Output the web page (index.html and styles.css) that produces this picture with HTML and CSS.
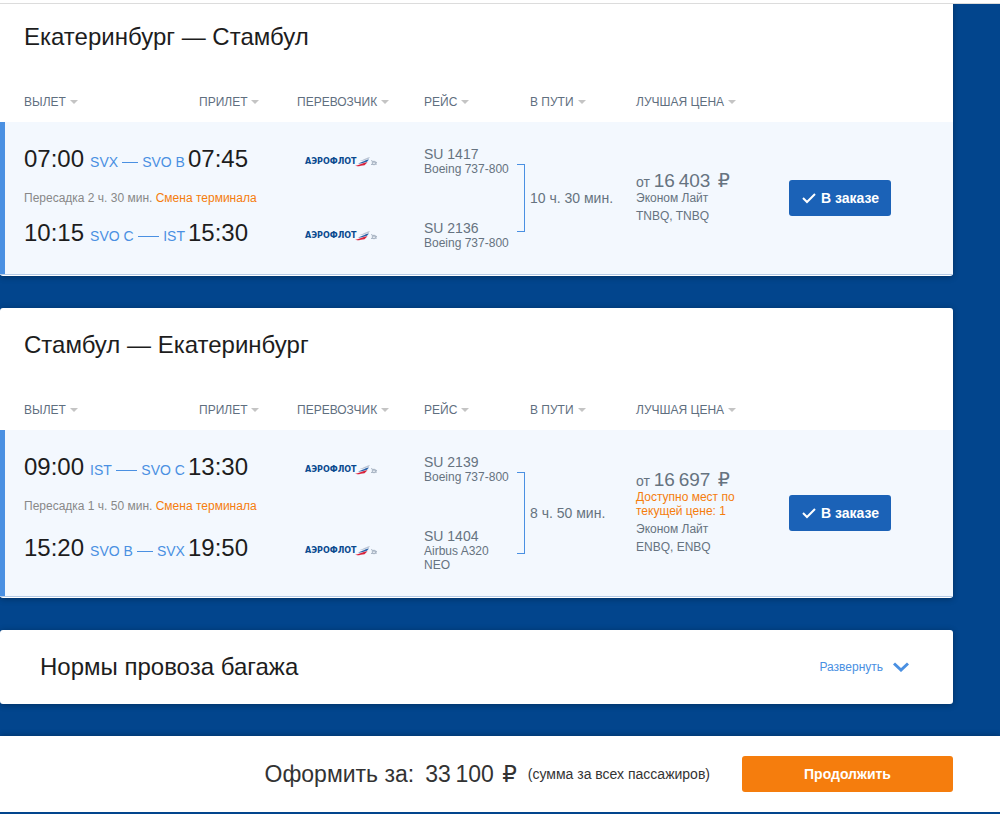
FILE: index.html
```
<!DOCTYPE html>
<html lang="ru">

<head>
	<meta charset="UTF-8">
	<meta name="viewport" content="width=device-width, initial-scale=1">
	<title>Выбор рейсов</title>
	<link rel="stylesheet" href="styles.css">
</head>

<body>
	<svg width="0" height="0" class="sprite" aria-hidden="true">
		<symbol id="wing" viewBox="0 0 24 12">
			<path d="M5 4.8 C8 4.4 9 2.4 15 1 L13.5 3 C10 3.6 8 5.6 5 4.8Z" fill="#b9c3d3" />
			<path d="M3 7.2 C7 6.6 9 4.2 14 3.4 L12 5.8 C9 6.3 7 8.2 3 7.2Z" fill="#2c62a8" />
			<path d="M0 9.8 C5 9 7 7 12.5 6.2 L9.5 9.2 C6 9.4 3 11 0 9.8Z" fill="#d8233c" />
			<path d="M16 4.5 L19 6 M16 8.5 L22 8 M18 6 L22 6.5" stroke="#a9b5c4" stroke-width="1" />
			<circle cx="19" cy="7" r="1.8" fill="none" stroke="#a9b5c4" stroke-width="1" />
		</symbol>
		<symbol id="check" viewBox="0 0 14 12">
			<path d="M1 6 L5 10 L13 2" fill="none" stroke="#fff" stroke-width="2" />
		</symbol>
	</svg>

	<div class="topbar"></div>

	<main class="page">
		<section class="card">
			<h2>Екатеринбург — Стамбул</h2>
			<table class="flights">
				<colgroup>
					<col class="c-dep">
					<col class="c-arr">
					<col class="c-carrier">
					<col class="c-flight">
					<col class="c-bracket">
					<col class="c-duration">
					<col class="c-price">
					<col>
				</colgroup>
				<thead>
					<tr>
						<th><button type="button" class="sort">ВЫЛЕТ</button></th>
						<th><button type="button" class="sort">ПРИЛЕТ</button></th>
						<th><button type="button" class="sort">ПЕРЕВОЗЧИК</button></th>
						<th><button type="button" class="sort">РЕЙС</button></th>
						<td></td>
						<th class="duration"><button type="button" class="sort">В ПУТИ</button></th>
						<th><button type="button" class="sort">ЛУЧШАЯ ЦЕНА</button></th>
						<td></td>
					</tr>
				</thead>
				<tbody>
					<tr class="first">
						<td colspan="2" class="route">
							<div class="leg">
								<span class="time">07:00</span>
								<span class="ports">SVX<i></i>SVO B</span>
								<span class="time">07:45</span>
							</div>
						</td>
						<td class="carrier"><div class="logo">АЭРОФЛОТ<svg class="wing"><use href="#wing" /></svg></div></td>
						<td class="flight"><div class="num">SU 1417</div>Boeing 737-800</td>
						<td rowspan="3" class="bracket"></td>
						<td rowspan="3" class="duration">10 ч. 30 мин.</td>
						<td rowspan="3" class="price">
							<div class="sum">от <b>16&#8201;403 <span class="rub">₽</span></b></div>
							<div>Эконом Лайт</div>
							<div>TNBQ, TNBQ</div>
						</td>
						<td rowspan="3"><button type="button" class="btn chosen"><svg class="check"><use href="#check" /></svg>В заказе</button></td>
					</tr>
					<tr class="transfer">
						<td colspan="4">Пересадка 2 ч. 30 мин. <span class="warn">Смена терминала</span></td>
					</tr>
					<tr class="last">
						<td colspan="2" class="route">
							<div class="leg">
								<span class="time">10:15</span>
								<span class="ports">SVO C<i></i>IST</span>
								<span class="time">15:30</span>
							</div>
						</td>
						<td class="carrier"><div class="logo">АЭРОФЛОТ<svg class="wing"><use href="#wing" /></svg></div></td>
						<td class="flight"><div class="num">SU 2136</div>Boeing 737-800</td>
					</tr>
				</tbody>
			</table>
		</section>

		<section class="card">
			<h2>Стамбул — Екатеринбург</h2>
			<table class="flights">
				<colgroup>
					<col class="c-dep">
					<col class="c-arr">
					<col class="c-carrier">
					<col class="c-flight">
					<col class="c-bracket">
					<col class="c-duration">
					<col class="c-price">
					<col>
				</colgroup>
				<thead>
					<tr>
						<th><button type="button" class="sort">ВЫЛЕТ</button></th>
						<th><button type="button" class="sort">ПРИЛЕТ</button></th>
						<th><button type="button" class="sort">ПЕРЕВОЗЧИК</button></th>
						<th><button type="button" class="sort">РЕЙС</button></th>
						<td></td>
						<th class="duration"><button type="button" class="sort">В ПУТИ</button></th>
						<th><button type="button" class="sort">ЛУЧШАЯ ЦЕНА</button></th>
						<td></td>
					</tr>
				</thead>
				<tbody>
					<tr class="first">
						<td colspan="2" class="route">
							<div class="leg">
								<span class="time">09:00</span>
								<span class="ports">IST<i></i>SVO C</span>
								<span class="time">13:30</span>
							</div>
						</td>
						<td class="carrier"><div class="logo">АЭРОФЛОТ<svg class="wing"><use href="#wing" /></svg></div></td>
						<td class="flight"><div class="num">SU 2139</div>Boeing 737-800</td>
						<td rowspan="3" class="bracket"></td>
						<td rowspan="3" class="duration">8 ч. 50 мин.</td>
						<td rowspan="3" class="price">
							<div class="sum">от <b>16&#8201;697 <span class="rub">₽</span></b></div>
							<div class="seats">Доступно мест по<br>текущей цене: 1</div>
							<div>Эконом Лайт</div>
							<div>ENBQ, ENBQ</div>
						</td>
						<td rowspan="3"><button type="button" class="btn chosen"><svg class="check"><use href="#check" /></svg>В заказе</button></td>
					</tr>
					<tr class="transfer">
						<td colspan="4">Пересадка 1 ч. 50 мин. <span class="warn">Смена терминала</span></td>
					</tr>
					<tr class="last">
						<td colspan="2" class="route">
							<div class="leg">
								<span class="time">15:20</span>
								<span class="ports">SVO B<i></i>SVX</span>
								<span class="time">19:50</span>
							</div>
						</td>
						<td class="carrier"><div class="logo">АЭРОФЛОТ<svg class="wing"><use href="#wing" /></svg></div></td>
						<td class="flight"><div class="num">SU 1404</div>Airbus A320<br>NEO</td>
					</tr>
				</tbody>
			</table>
		</section>

		<section class="card baggage">
			<h2>Нормы провоза багажа</h2>
			<button type="button" class="expand">Развернуть
				<svg width="16" height="10" viewBox="0 0 16 10">
					<path d="M1 1.5 L8 8 L15 1.5" fill="none" stroke="#4a90e2" stroke-width="3" />
				</svg>
			</button>
		</section>
	</main>

	<footer class="total">
		<span class="label">Оформить за:</span>
		<span class="amount">33&#8201;100 <span class="rub">₽</span></span>
		<span class="note">(сумма за всех пассажиров)</span>
		<button type="button" class="btn next">Продолжить</button>
	</footer>
</body>

</html>
```
FILE: styles.css
```
body {
	margin: 0;
	background: #02458d;
	color: #1d1d1d;
	font-family: "Liberation Sans", Arial, sans-serif;
	font-size: 14px;
}

button {
	font-family: inherit;
	border: 0;
	padding: 0;
	background: none;
	cursor: pointer;
}

.sprite {
	position: absolute;
}

.topbar {
	position: sticky;
	top: 0;
	z-index: 1;
	box-sizing: border-box;
	height: 4px;
	margin-bottom: -4px;
	background: #fff;
	border-bottom: 1px solid #dcdcdc;
}

.page {
	display: flex;
	flex-direction: column;
	gap: 32px;
	padding: 0 47px 32px 0;
}

.card {
	background: #fff;
	border-radius: 3px;
	padding-bottom: 1px;
	box-shadow: 0 1px 6px rgba(0, 0, 0, 0.3);
}

h2 {
	margin: 0;
	padding: 22px 24px 0;
	font-size: 24px;
	line-height: 30px;
	font-weight: normal;
}

/* flights table */

.flights {
	width: 100%;
	table-layout: fixed;
	border-spacing: 0;
	border-bottom: 1px solid #b5cbe6;
}

.c-dep { width: 199px; }
.c-arr { width: 98px; }
.c-carrier { width: 127px; }
.c-flight { width: 93px; }
.c-bracket { width: 8px; }
.c-duration { width: 111px; }
.c-price { width: 153px; }

.flights th,
.flights td {
	padding: 0;
	text-align: left;
}

.flights thead th {
	height: 38px;
	padding: 31px 0 1px;
	line-height: 16px;
}

.flights thead th:first-child {
	padding-left: 24px;
}

.flights .duration {
	padding-left: 5px;
}

.sort {
	display: flex;
	align-items: center;
	gap: 4px;
	color: #5f6f7f;
	font-size: 12px;
	line-height: 16px;
}

.sort::after {
	content: "";
	border: 4px solid transparent;
	border-top-color: #c4c4c4;
	border-bottom: 0;
}

.flights tbody {
	background: #f3f8fe;
	color: #667380;
}

.flights tbody td:first-child {
	border-left: 5px solid #4a90e2;
	padding-left: 19px;
}

.flights .first .route,
.flights .first .carrier,
.flights .first .flight {
	padding-top: 24px;
}

.flights .last .route,
.flights .last .carrier,
.flights .last .flight {
	padding-bottom: 24px;
}

.leg {
	display: flex;
	align-items: baseline;
	width: 224px;
	padding-bottom: 4px;
}

.time {
	color: #1d1d1d;
	font-size: 24px;
	line-height: 26px;
}

.ports {
	display: flex;
	flex: 1;
	align-items: center;
	gap: 4px;
	margin: 0 3px 0 6px;
	color: #4a90e2;
	line-height: 16px;
	white-space: nowrap;
}

.ports i {
	flex: 1;
	height: 1px;
	background: #4a90e2;
}

.transfer td {
	height: 44px;
	color: #888;
	font-size: 12px;
}

.warn {
	color: #f57d0d;
}

.logo {
	display: flex;
	align-items: center;
	padding: 2px 0 0 8px;
	color: #0a4a8f;
	font: bold 8px/12px "DejaVu Sans", sans-serif;
}

.wing {
	width: 24px;
	height: 12px;
	margin-left: -2px;
}

.flight {
	font-size: 12px;
	line-height: 14px;
}

.num {
	font-size: 14px;
	line-height: 16px;
}

/* bracket joining both legs */
.bracket {
	background-image:
		linear-gradient(#4a90e2, #4a90e2),
		linear-gradient(#4a90e2, #4a90e2),
		linear-gradient(#4a90e2, #4a90e2);
	background-repeat: no-repeat;
	background-size: 8px 1px, 8px 1px, 1px calc(100% - 84px);
	background-position: left 0 top 42px, left 0 bottom 42px, right 0 center;
}

.price {
	font-size: 12px;
	line-height: 18px;
}

.sum {
	height: 18px;
	font-size: 14px;
}

.sum b {
	font-size: 19px;
	font-weight: normal;
}

.rub {
	margin-left: 2px;
	font-family: "DejaVu Sans", sans-serif;
	line-height: 1;
}

.seats {
	padding: 2px 0;
	color: #f57d0d;
	line-height: 14px;
}

.btn {
	border-radius: 3px;
	color: #fff;
	font-size: 14px;
	font-weight: bold;
	line-height: 36px;
}

.chosen {
	display: flex;
	align-items: center;
	gap: 5px;
	padding: 0 12px 0 13px;
	background: #1b62b7;
}

.check {
	width: 14px;
	height: 12px;
}

/* baggage */

.baggage {
	display: flex;
	align-items: center;
	justify-content: space-between;
	padding: 22px 44px 22px 40px;
}

.baggage h2 {
	padding: 0;
}

.expand {
	display: flex;
	align-items: center;
	gap: 10px;
	color: #4a90e2;
	font-size: 12px;
}

/* total */

.total {
	display: flex;
	align-items: center;
	justify-content: flex-end;
	padding: 20px 47px 20px 0;
	background: #fff;
	box-shadow: 0 0 6px rgba(0, 0, 0, 0.3);
	color: #333;
}

.label,
.amount {
	font-size: 23px;
	line-height: 28px;
}

.amount {
	margin: 0 11px;
}

.next {
	width: 211px;
	margin-left: 32px;
	background: #f57d0d;
}
```
